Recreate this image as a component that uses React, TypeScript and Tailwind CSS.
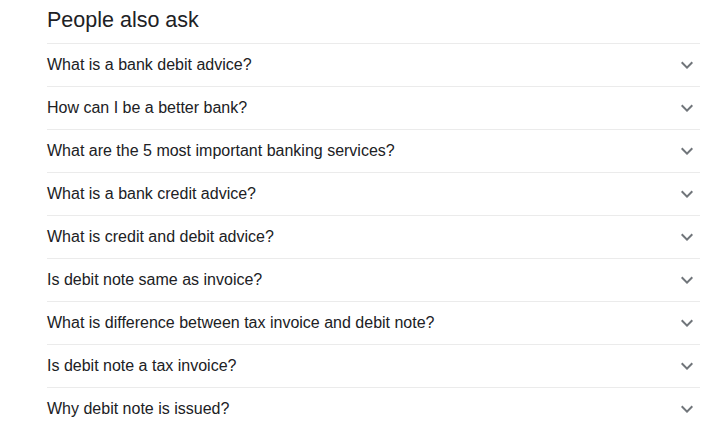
const questions = [
  "What is a bank debit advice?",
  "How can I be a better bank?",
  "What are the 5 most important banking services?",
  "What is a bank credit advice?",
  "What is credit and debit advice?",
  "Is debit note same as invoice?",
  "What is difference between tax invoice and debit note?",
  "Is debit note a tax invoice?",
  "Why debit note is issued?",
];

function ExpandMore() {
  return (
    <svg width="24" height="24" viewBox="0 0 24 24" className="shrink-0 fill-[#70757a]">
      <path d="M16.59 8.59L12 13.17 7.41 8.59 6 10l6 6 6-6z" />
    </svg>
  );
}

export default function App() {
  return (
    <div
      className="h-[430px] w-[725px] overflow-hidden bg-white pl-[47px]"
      style={{ fontFamily: '"Liberation Sans", Arial, sans-serif' }}
    >
      <div className="w-[653px]">
        <h2 className="flex h-[43px] items-center pb-[3px] text-[21.5px] leading-[28px] text-[#202124]">
          People also ask
        </h2>
        {questions.map((q) => (
          <div
            key={q}
            className="flex h-[43px] items-center justify-between border-t border-[#ebebeb] pr-[1px] text-[16px] text-[#202124]"
          >
            <span>{q}</span>
            <ExpandMore />
          </div>
        ))}
      </div>
    </div>
  );
}
